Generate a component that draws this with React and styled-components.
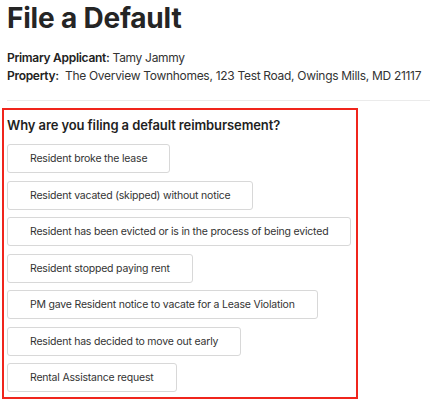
import styled, { createGlobalStyle } from 'styled-components'

const GlobalStyle = createGlobalStyle`
  body {
    margin: 0;
    background: #fff;
    font-family: Inter, "Liberation Sans", sans-serif;
    color: #2b2b2b;
  }
`;

const reasons = [
    'Resident broke the lease',
    'Resident vacated (skipped) without notice',
    'Resident has been evicted or is in the process of being evicted',
    'Resident stopped paying rent',
    'PM gave Resident notice to vacate for a Lease Violation',
    'Resident has decided to move out early',
    'Rental Assistance request',
];

const App = () => {
    return (
        <Page>
            <GlobalStyle />
            <Title>File a Default</Title>
            <Info>
                <InfoLine><strong>Primary Applicant:</strong> Tamy Jammy</InfoLine>
                <InfoLine><strong>Property:</strong>&nbsp; The Overview Townhomes, 123 Test Road, Owings Mills, MD 21117</InfoLine>
            </Info>
            <Divider />
            <ReasonBox>
                <Question>Why are you filing a default reimbursement?</Question>
                <Options>
                    {reasons.map((r) => (
                        <OptionButton key={r}>{r}</OptionButton>
                    ))}
                </Options>
            </ReasonBox>
        </Page>
    );
}

export default App;

const Page = styled.div`
    padding: 0 8px 0 7px;
`;

const Title = styled.h1`
    margin: 0;
    font-size: 28px;
    line-height: 36px;
    font-weight: 700;
    color: #252525;
    letter-spacing: -0.2px;
`;

const Info = styled.div`
    margin-top: 13px;
`;

const InfoLine = styled.div`
    font-size: 12px;
    line-height: 18px;
    color: #333;
    white-space: nowrap;
    letter-spacing: -0.3px;

    strong {
        font-weight: 600;
        color: #222;
    }
`;

const Divider = styled.hr`
    margin: 15px 0 7px;
    border: none;
    border-top: 1px solid #ebebeb;
`;

const ReasonBox = styled.section`
    margin-left: -5px;
    width: 356px;
    box-sizing: border-box;
    border: 2px solid #f0251c;
    padding: 6px 3px 5px 3px;
`;

const Question = styled.h2`
    margin: 0 0 10px;
    font-size: 13px;
    line-height: 18px;
    font-weight: 600;
    color: #1f1f1f;
    letter-spacing: -0.1px;
`;

const Options = styled.div`
    display: flex;
    flex-direction: column;
    align-items: flex-start;
    gap: 7.5px;
`;

const OptionButton = styled.button`
    height: 29px;
    padding: 0 22px;
    background: #fff;
    border: 1px solid #d8d8d8;
    border-radius: 3px;
    font-family: Inter, "Liberation Sans", sans-serif;
    font-size: 10.5px;
    letter-spacing: -0.2px;
    color: #333;
    text-align: left;
    white-space: nowrap;
    cursor: pointer;
`;
